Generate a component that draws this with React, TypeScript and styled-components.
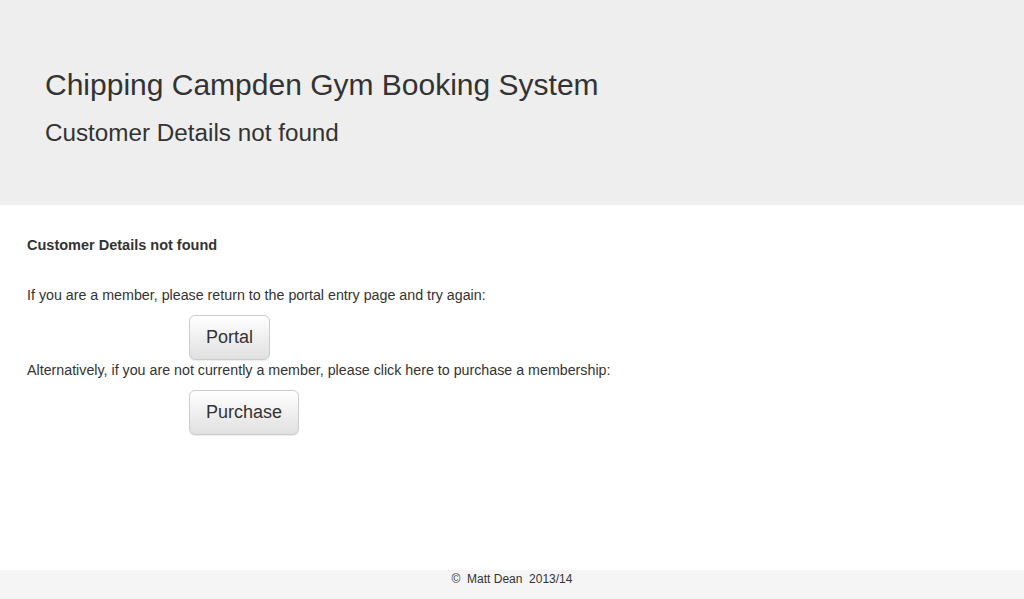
import React from "react";
import styled, { createGlobalStyle } from "styled-components";

const Global = createGlobalStyle`
  html, body { margin: 0; padding: 0; }
  body {
    font-family: "Liberation Sans", Arial, sans-serif;
    font-size: 14px;
    line-height: 1.42857;
    color: #333;
    background: #fff;
  }
  * { box-sizing: border-box; }
`;

const Page = styled.div`
  display: flex;
  flex-direction: column;
  min-height: 599px;
`;

const Jumbotron = styled.header`
  background: #eeeeee;
  height: 205px;
  padding: 64px 45px 0;
`;

const Title = styled.h1`
  margin: 0;
  font-size: 30px;
  font-weight: normal;
  line-height: 42px;
`;

const Subtitle = styled.h2`
  margin: 10px 0 0;
  font-size: 24.25px;
  font-weight: normal;
  line-height: 33px;
`;

const Main = styled.main`
  flex: 1;
  padding: 30px 27px 0;
`;

const Heading = styled.h4`
  margin: 0 0 30px;
  font-size: 14.5px;
  font-weight: bold;
  line-height: 20px;
`;

const Text = styled.p`
  margin: 0;
  font-size: 14.25px;
  line-height: 20px;
`;

const ButtonRow = styled.div`
  padding-left: 162px;
  margin: 10px 0 0;
  display: flex;
`;

const Button = styled.button`
  font-family: "Liberation Sans", Arial, sans-serif;
  font-size: 18px;
  line-height: 23px;
  color: #333;
  padding: 10px 16px;
  border: 1px solid #ccc;
  border-radius: 6px;
  background: linear-gradient(to bottom, #fff 0%, #e0e0e0 100%);
  box-shadow: inset 0 1px 0 rgba(255,255,255,.15), 0 1px 1px rgba(0,0,0,.075);
  cursor: pointer;
`;

const Footer = styled.footer`
  background: #f5f5f5;
  height: 29px;
  text-align: center;
  font-size: 12px;
  line-height: 18px;
  color: #333;
`;

export default function App() {
  return (
    <Page>
      <Global />
      <Jumbotron>
        <Title>Chipping Campden Gym Booking System</Title>
        <Subtitle>Customer Details not found</Subtitle>
      </Jumbotron>
      <Main>
        <Heading>Customer Details not found</Heading>
        <Text>If you are a member, please return to the portal entry page and try again:</Text>
        <ButtonRow>
          <Button>Portal</Button>
        </ButtonRow>
        <Text>Alternatively, if you are not currently a member, please click here to purchase a membership:</Text>
        <ButtonRow>
          <Button>Purchase</Button>
        </ButtonRow>
      </Main>
      <Footer>©&nbsp; Matt Dean&nbsp; 2013/14</Footer>
    </Page>
  );
}
